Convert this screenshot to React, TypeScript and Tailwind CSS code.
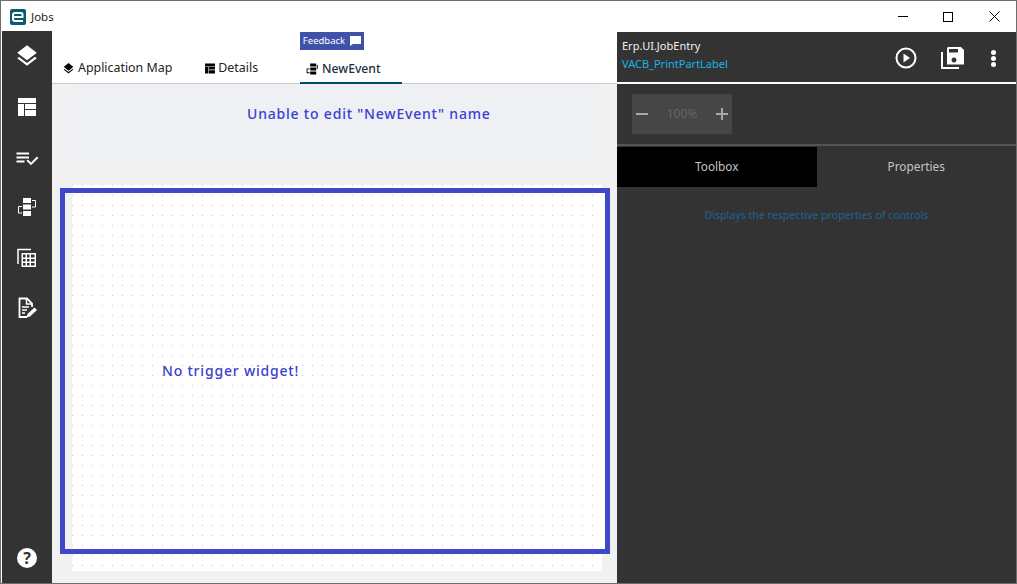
import React from 'react'

const sideIcons = [
  // layers
  <svg key="layers" width="26" height="26" viewBox="0 0 24 24" fill="white">
    <path d="M11.99 18.54l-7.37-5.73L3 14.07l9 7 9-7-1.63-1.27-7.38 5.74zM12 16l7.36-5.73L21 9l-9-7-9 7 1.63 1.27L12 16z" />
  </svg>,
  // table layout
  <svg key="table" width="20" height="20" viewBox="0 0 20 20" fill="white">
    <path d="M1 1h18v5H1zM1 7h6v12H1zM8 7h11v5H8zM8 13h11v6H8z" />
  </svg>,
  // list check
  <svg key="list" width="24" height="24" viewBox="0 0 24 24" fill="white">
    <path d="M14 9.5H1.5v-2H14zM14 13.5H1.5v-2H14zM9.5 17.500h-8v-2h8z" />
    <path d="M22 11.500l1.400 1.400-7.400 7.300-4.500-4.400 1.400-1.400 3.100 3z" />
  </svg>,
  // workflow
  <svg key="flow" width="20" height="20" viewBox="0 0 20 20" fill="white">
    <path d="M6 1h8v5H6zM6 7.500h8v5H6zM6 14h8v5H6z" />
    <path d="M15 3.500h3.500v6.500H15M5 9.500H1.500V16H5" fill="none" stroke="white" strokeWidth="1" />
  </svg>,
  // grid copy
  <svg key="grid" width="20" height="20" viewBox="0 0 20 20" fill="white">
    <path d="M1 16V1.500h13" fill="none" stroke="white" strokeWidth="1.500" />
    <path
      fillRule="evenodd"
      d="M4.500 5h14.500v14H4.500zM6 6.500v3h2.500v-3zM10 6.500v3h2.500v-3zM14 6.500v3h3.500v-3zM6 11v2.500h2.500V11zM10 11v2.500h2.500V11zM14 11v2.500h3.500V11zM6 15v2.500h2.500V15zM10 15v2.500h2.500V15zM14 15v2.500h3.500V15z"
    />
  </svg>,
  // doc edit
  <svg key="doc" width="22" height="22" viewBox="0 0 22 22" fill="none" stroke="white" strokeWidth="1.800">
    <path d="M11 20H3.500V1.500H11L16 6.500V10" />
    <path d="M10.500 1.500V7h5.500" strokeWidth="1.500" />
    <path d="M6 10h7M6 13h5M6 16h3" strokeWidth="1.500" />
    <path d="M10.500 20.500l1-3.500 7-6.500 2.500 2.500-7 6.500z" fill="white" stroke="none" />
  </svg>,
]

export default function App() {
  return (
    <div className="w-[1017px] h-[584px] flex flex-col overflow-hidden bg-white border border-[#6e6e6e] font-['Noto_Sans',sans-serif]">
      {/* title bar */}
      <div className="h-[31px] shrink-0 flex items-center bg-white">
        <div className="ml-[9px] w-[16px] h-[16px] rounded-[2px] bg-[#0b5a70] flex items-center justify-center">
          <svg width="12" height="10" viewBox="0 0 12 10" fill="none" stroke="white" strokeWidth="2">
            <path d="M1.500 5h9V2.500q0-1.500-1.500-1.500H3Q1 1 1 3v4q0 2 2 2h8" />
          </svg>
        </div>
        <span className="ml-[5px] text-[11.500px] text-[#1a1a1a]">Jobs</span>
        <div className="ml-auto flex items-center">
          <div className="w-[42px] flex justify-center">
            <div className="w-[10px] h-px bg-black" />
          </div>
          <div className="w-[48px] flex justify-center">
            <div className="w-[10px] h-[10px] border border-black" />
          </div>
          <div className="w-[44px] flex justify-center">
            <svg width="11" height="11" viewBox="0 0 11 11" stroke="black" strokeWidth="1">
              <path d="M0.500 0.500l10 10M10.500 0.500l-10 10" />
            </svg>
          </div>
        </div>
      </div>

      <div className="flex-1 flex min-h-0">
        {/* sidebar */}
        <div className="w-[50px] ml-px shrink-0 bg-[#333333] flex flex-col items-center -mt-px pt-px pb-[15px]">
          <div className="w-full -mt-px">
            {sideIcons.map((icon, i) => (
              <div key={i} className="h-[50.400px] w-full flex items-center justify-center">
                {icon}
              </div>
            ))}
          </div>
          <div className="mt-auto w-[20px] h-[20px] rounded-full bg-white flex items-center justify-center text-[#333333] text-[16px] font-bold leading-none">
            ?
          </div>
        </div>

        {/* middle */}
        <div className="w-[565px] shrink-0 flex flex-col bg-[#f1f1f1]">
          <div className="h-[52px] shrink-0 bg-white border-b border-[#cccccc] flex items-end text-[12.400px] text-[#222222] relative">
            <div className="ml-[10px] h-[36px] pt-[7px] flex items-center gap-[3px]">
              <svg width="13" height="13" viewBox="0 0 24 24" fill="black">
                <path d="M11.990 18.540l-7.370-5.730L3 14.070l9 7 9-7-1.630-1.270-7.380 5.740zM12 16l7.360-5.730L21 9l-9-7-9 7 1.630 1.270L12 16z" />
              </svg>
              <span>Application Map</span>
            </div>
            <div className="ml-[32px] h-[36px] pt-[7px] flex items-center gap-[2px]">
              <svg width="12" height="11" viewBox="0 0 20 20" fill="black">
                <path d="M1 1h18v5H1zM1 7h6v12H1zM8 7h11v5H8zM8 13h11v6H8z" />
              </svg>
              <span>Details</span>
            </div>
            <div className="ml-[42px] w-[102px] h-[36px] pt-[7px] flex items-center pl-[6px] gap-[4px] border-b-[3px] border-[#004b6b] -mb-[2px] text-[12.200px] font-medium text-[#20303a]">
              <svg width="12" height="12" viewBox="0 0 20 20" fill="black">
                <path d="M7 1h10v5H7zM7 7.500h10v5H7zM7 14h10v5H7zM1 9h5v1.500H2.500v5H6V17H1z" />
                <path d="M18 3h1.500v7H18z" />
              </svg>
              <span>NewEvent</span>
            </div>
            <div className="absolute left-[248px] top-0 w-[64px] h-[18px] bg-[#3f51a9] text-white text-[9.500px] flex items-center justify-center gap-[5px]">
              <span>Feedback</span>
              <svg width="11" height="10" viewBox="0 0 11 10" fill="white">
                <path d="M0 0h11v8H3L0 10z" />
              </svg>
            </div>
          </div>

          <div className="flex-1 relative px-[20px] min-h-0">
            <div className="h-[81px] bg-[#eef0f3] pl-[175px] pt-[19px] text-[#3a40d0] text-[14px] font-medium tracking-[0.800px]">
              Unable to edit "NewEvent" name
            </div>
            <div className="mt-[20px] w-[530px] h-[386px] bg-white bg-[radial-gradient(circle_at_0.500px_0.500px,#c4c4c4_0.700px,transparent_0.800px)] bg-[length:10px_10px]" />
            {/* selection frame over the canvas */}
            <div className="absolute left-[8px] top-[104px] w-[550px] h-[366px] border-[5px] border-[#4047cb] flex items-center pb-[2px]">
              <div className="absolute right-0 top-0 bottom-0 w-[3px] bg-white" />
              <span className="ml-[97px] text-[#3a40d0] text-[14px] font-medium tracking-[0.800px]">No trigger widget!</span>
            </div>
          </div>
        </div>

        {/* right panel */}
        <div className="flex-1 flex flex-col bg-[#333333] min-w-0">
          <div className="h-[52px] shrink-0 flex items-center pl-[5px] border-b-2 border-white">
            <div className="flex flex-col text-[11px] leading-[18px] pb-[5px]">
              <span className="text-[#f2f2f2]">Erp.UI.JobEntry</span>
              <span className="text-[#19b5e8]">VACB_PrintPartLabel</span>
            </div>
            <div className="ml-auto mt-[2px] flex items-center">
              <svg width="22" height="22" viewBox="0 0 22 22" fill="none" stroke="white" strokeWidth="2">
                <circle cx="11" cy="11" r="9.500" />
                <path d="M8.500 6.500l6.500 4.500-6.500 4.500z" fill="white" stroke="none" />
              </svg>
              <svg className="ml-[24px]" width="23" height="22" viewBox="0 0 23 22" fill="white">
                <path
                  fillRule="evenodd"
                  d="M7 0h13l3 3v14.500H6V1zM8 2v3.500h9V2zM13 10.500a2.500 2.500 0 1 0 .01 0z"
                />
                <path d="M0 5h2v15h16v2H0z" />
              </svg>
              <div className="ml-[27px] mr-[20px] flex flex-col gap-[1px]">
                <div className="w-[5px] h-[5px] rounded-full bg-white" />
                <div className="w-[5px] h-[5px] rounded-full bg-white" />
                <div className="w-[5px] h-[5px] rounded-full bg-white" />
              </div>
            </div>
          </div>

          <div className="h-[62px] shrink-0 border-b-2 border-[#555555] pt-[10px] pl-[15px]">
            <div className="w-[100px] h-[40px] bg-[#464646] flex items-center justify-between px-[3px] text-[#a8a8a8]">
              <svg width="14" height="14" viewBox="0 0 14 14" stroke="currentColor" strokeWidth="2">
                <path d="M1 7h12" />
              </svg>
              <span className="text-[12px] text-[#656565]">100%</span>
              <svg width="14" height="14" viewBox="0 0 14 14" stroke="currentColor" strokeWidth="2">
                <path d="M1 7h12M7 1v12" />
              </svg>
            </div>
          </div>

          <div className="h-[40px] shrink-0 mt-px flex text-[11.800px] text-[#c4c4c4]">
            <div className="w-[200px] bg-black flex items-center justify-center">Toolbox</div>
            <div className="w-[200px] flex items-center justify-center">Properties</div>
          </div>

          <p className="mt-[21px] text-center text-[10.600px] text-[#1b6496]">Displays the respective properties of controls</p>
        </div>
      </div>
    </div>
  )
}
